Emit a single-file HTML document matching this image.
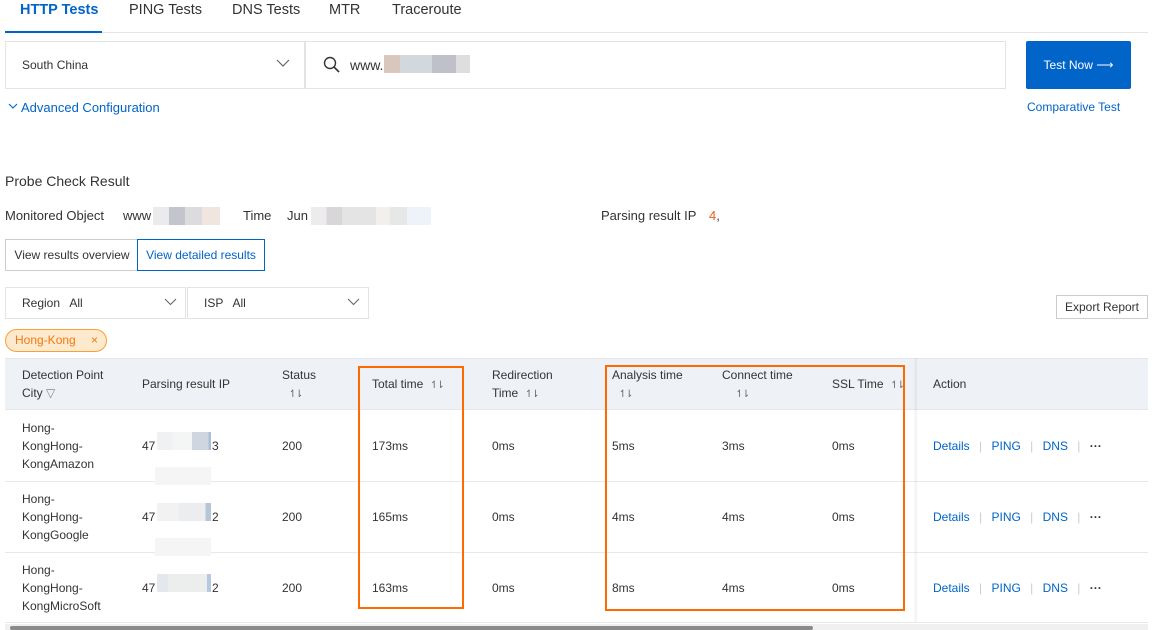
<!DOCTYPE html>
<html><head><meta charset="utf-8"><style>
*{margin:0;padding:0;box-sizing:border-box}
body{width:1159px;height:630px;overflow:hidden;background:#fff;font-family:"Liberation Sans",Arial,sans-serif;color:#333;position:relative;font-size:12px}
.a{position:absolute;white-space:nowrap}
.blur{position:absolute;height:18px}
.cell{position:absolute;font-size:12px;color:#333;line-height:18px;white-space:nowrap}
.link,.cell.link{color:#0064c8}
.sort{font-size:10px;color:#666;letter-spacing:-2px}
</style></head><body>
<!-- tabs -->
<div class="a" style="left:20px;top:2px;font-size:14.5px;font-weight:bold;color:#0064c8">HTTP Tests</div>
<div class="a" style="left:129px;top:2px;font-size:14.5px;color:#333">PING Tests</div>
<div class="a" style="left:232px;top:2px;font-size:14.5px;color:#333">DNS Tests</div>
<div class="a" style="left:329px;top:2px;font-size:14.5px;color:#333">MTR</div>
<div class="a" style="left:392px;top:2px;font-size:14.5px;color:#333">Traceroute</div>
<div class="a" style="left:5px;top:32px;width:1143px;height:1px;background:#e5e5e5"></div>
<div class="a" style="left:5px;top:31px;width:97px;height:2px;background:#0064c8"></div>
<!-- inputs -->
<div class="a" style="left:5px;top:41px;width:300px;height:48px;border:1px solid #e3e3e3"></div>
<div class="a" style="left:22px;top:58px;font-size:12px;color:#333">South China</div>
<svg class="a" style="left:276px;top:59px" width="14" height="9"><path d="M1 1l6 6 6-6" fill="none" stroke="#666" stroke-width="1.2"/></svg>
<div class="a" style="left:305px;top:41px;width:701px;height:48px;border:1px solid #e3e3e3"></div>
<svg class="a" style="left:323px;top:56px" width="18" height="18"><circle cx="7" cy="7" r="5.5" fill="none" stroke="#333" stroke-width="1.4"/><path d="M11 11l5 5" stroke="#333" stroke-width="1.6"/></svg>
<div class="a" style="left:350px;top:57px;font-size:14px;color:#333">www.</div>
<div class="blur" style="left:384px;top:55px;width:16px;background:#d9c6bc"></div>
<div class="blur" style="left:400px;top:55px;width:32px;background:#d3d8dc"></div>
<div class="blur" style="left:432px;top:55px;width:24px;background:#c0c0c8"></div>
<div class="blur" style="left:456px;top:55px;width:14px;background:#dedee0"></div>
<div class="a" style="left:1026px;top:41px;width:105px;height:48px;background:#0064c8;border-radius:2px;color:#fff;font-size:12px;line-height:48px;text-align:center">Test Now ⟶</div>
<div class="a link" style="left:1027px;top:100px;font-size:12px">Comparative Test</div>
<svg class="a" style="left:8px;top:103px" width="10" height="8"><path d="M1 1l4 4 4-4" fill="none" stroke="#0064c8" stroke-width="1.1"/></svg>
<div class="a link" style="left:21px;top:100px;font-size:13px">Advanced Configuration</div>
<!-- result -->
<div class="a" style="left:5px;top:173px;font-size:14px;color:#333">Probe Check Result</div>
<div class="a" style="left:5px;top:208px;font-size:13px">Monitored Object</div>
<div class="a" style="left:123px;top:208px;font-size:13px">www</div>
<div class="blur" style="left:153px;top:207px;width:16px;background:#ebebed"></div>
<div class="blur" style="left:169px;top:207px;width:16px;background:#c3c4cc"></div>
<div class="blur" style="left:185px;top:207px;width:17px;background:#dcdcde"></div>
<div class="blur" style="left:202px;top:207px;width:18px;background:#f0e6df"></div>
<div class="a" style="left:243px;top:208px;font-size:13px">Time</div>
<div class="a" style="left:287px;top:208px;font-size:13px">Jun</div>
<div class="blur" style="left:311px;top:207px;width:120px;background:linear-gradient(90deg,#ececec 0 13%,#d8d6d8 13% 26%,#e4e4e4 26% 54%,#f3efec 54% 66%,#e6e7e7 66% 80%,#eef2fa 80%)"></div>
<div class="a" style="left:601px;top:208px;font-size:13px">Parsing result IP</div>
<div class="a" style="left:709px;top:208px;font-size:13px;color:#f05a1e">4<span style="color:#333">,</span></div>
<div class="a" style="left:5px;top:239px;width:133px;height:32px;border:1px solid #ccc;border-right:none;font-size:12px;line-height:30px;text-align:center">View results overview</div>
<div class="a" style="left:137px;top:239px;width:128px;height:32px;border:1px solid #0064c8;font-size:12px;line-height:30px;text-align:center;color:#0064c8">View detailed results</div>
<div class="a" style="left:5px;top:287px;width:181px;height:32px;border:1px solid #e3e3e3"></div>
<div class="a" style="left:22px;top:296px;font-size:12px">Region &nbsp; All</div>
<svg class="a" style="left:164px;top:298px" width="13" height="8"><path d="M1 1l5.5 5.5 5.5-5.5" fill="none" stroke="#666" stroke-width="1.1"/></svg>
<div class="a" style="left:187px;top:287px;width:182px;height:32px;border:1px solid #e3e3e3"></div>
<div class="a" style="left:204px;top:296px;font-size:12px">ISP &nbsp; All</div>
<svg class="a" style="left:347px;top:298px" width="13" height="8"><path d="M1 1l5.5 5.5 5.5-5.5" fill="none" stroke="#666" stroke-width="1.1"/></svg>
<div class="a" style="left:1056px;top:295px;width:92px;height:24px;border:1px solid #ccc;font-size:12px;line-height:22px;text-align:center">Export Report</div>
<div class="a" style="left:5px;top:329px;width:102px;height:23px;border:1px solid #f7a23a;border-radius:12px;background:#fde9cc;color:#f07a12;font-size:12px;line-height:21px;padding-left:9px">Hong-Kong <span style="margin-left:12px">×</span></div>
<!-- table -->
<div class="a" style="left:5px;top:358px;width:1143px;height:52px;background:#eef1f5;border-top:1px solid #e3e6ea;border-bottom:1px solid #e3e6ea"></div>
<div class="a" style="left:5px;top:481px;width:1143px;height:1px;background:#e8e8e8"></div>
<div class="a" style="left:5px;top:552px;width:1143px;height:1px;background:#e8e8e8"></div>
<div class="a" style="left:5px;top:622px;width:1143px;height:1px;background:#e8e8e8"></div>
<div class="a" style="left:913px;top:358px;width:4px;height:264px;background:linear-gradient(90deg,rgba(0,0,0,0),rgba(0,0,0,.06))"></div>
<div class="cell" style="left:22px;top:366px">Detection Point<br>City <span style="color:#888">▽</span></div>
<div class="cell" style="left:142px;top:375px">Parsing result IP</div>
<div class="cell" style="left:282px;top:366px">Status<br>&nbsp;&nbsp;<span class="sort">↿⇂</span></div>
<div class="cell" style="left:372px;top:375px">Total time &nbsp;<span class="sort">↿⇂</span></div>
<div class="cell" style="left:492px;top:366px">Redirection<br>Time &nbsp;<span class="sort">↿⇂</span></div>
<div class="cell" style="left:612px;top:366px">Analysis time<br>&nbsp;&nbsp;<span class="sort">↿⇂</span></div>
<div class="cell" style="left:722px;top:366px">Connect time<br>&nbsp;&nbsp;&nbsp;&nbsp;<span class="sort">↿⇂</span></div>
<div class="cell" style="left:832px;top:375px">SSL Time &nbsp;<span class="sort">↿⇂</span></div>
<div class="cell" style="left:933px;top:375px">Action</div>

<!-- rows -->
<div class="cell" style="left:22px;top:419px">Hong-<br>KongHong-<br>KongAmazon</div>
<div class="cell" style="left:142px;top:437px">47</div>
<div class="blur" style="left:157px;top:432px;width:54px;background:linear-gradient(90deg,#f0f1f2 0 30%,#f4f5f5 30% 65%,#cfd6df 65% 95%,#a9bfd8 95%)"></div>
<div class="cell" style="left:212px;top:437px">3</div>
<div class="blur" style="left:155px;top:467px;width:56px;background:#f5f5f5"></div>
<div class="cell" style="left:282px;top:437px">200</div>
<div class="cell" style="left:372px;top:437px">173ms</div>
<div class="cell" style="left:492px;top:437px">0ms</div>
<div class="cell" style="left:612px;top:437px">5ms</div>
<div class="cell" style="left:722px;top:437px">3ms</div>
<div class="cell" style="left:832px;top:437px">0ms</div>

<div class="cell" style="left:22px;top:490px">Hong-<br>KongHong-<br>KongGoogle</div>
<div class="cell" style="left:142px;top:508px">47</div>
<div class="blur" style="left:157px;top:503px;width:54px;background:linear-gradient(90deg,#f2f2f3 0 40%,#ecedee 40% 90%,#b7c5d8 90%)"></div>
<div class="cell" style="left:212px;top:508px">2</div>
<div class="blur" style="left:155px;top:538px;width:56px;background:#f5f5f5"></div>
<div class="cell" style="left:282px;top:508px">200</div>
<div class="cell" style="left:372px;top:508px">165ms</div>
<div class="cell" style="left:492px;top:508px">0ms</div>
<div class="cell" style="left:612px;top:508px">4ms</div>
<div class="cell" style="left:722px;top:508px">4ms</div>
<div class="cell" style="left:832px;top:508px">0ms</div>

<div class="cell" style="left:22px;top:561px">Hong-<br>KongHong-<br>KongMicroSoft</div>
<div class="cell" style="left:142px;top:579px">47</div>
<div class="blur" style="left:157px;top:574px;width:54px;background:linear-gradient(90deg,#e4e7ec 0 20%,#eceded 20% 93%,#b7c9e0 93%)"></div>
<div class="cell" style="left:212px;top:579px">2</div>
<div class="cell" style="left:282px;top:579px">200</div>
<div class="cell" style="left:372px;top:579px">163ms</div>
<div class="cell" style="left:492px;top:579px">0ms</div>
<div class="cell" style="left:612px;top:579px">8ms</div>
<div class="cell" style="left:722px;top:579px">4ms</div>
<div class="cell" style="left:832px;top:579px">0ms</div>

<!-- actions -->
<div class="cell link" style="left:933px;top:437px">Details <span style="color:#ccc;margin:0 6px">|</span> PING <span style="color:#ccc;margin:0 6px">|</span> DNS <span style="color:#ccc;margin:0 6px">|</span> <span style="color:#333;font-weight:bold">···</span></div>
<div class="cell link" style="left:933px;top:508px">Details <span style="color:#ccc;margin:0 6px">|</span> PING <span style="color:#ccc;margin:0 6px">|</span> DNS <span style="color:#ccc;margin:0 6px">|</span> <span style="color:#333;font-weight:bold">···</span></div>
<div class="cell link" style="left:933px;top:579px">Details <span style="color:#ccc;margin:0 6px">|</span> PING <span style="color:#ccc;margin:0 6px">|</span> DNS <span style="color:#ccc;margin:0 6px">|</span> <span style="color:#333;font-weight:bold">···</span></div>

<!-- orange boxes -->
<div class="a" style="left:358px;top:366px;width:106px;height:243px;border:2.5px solid #ff6a00"></div>
<div class="a" style="left:605px;top:365px;width:300px;height:246px;border:2.5px solid #ff6a00"></div>

<!-- scrollbar -->
<div class="a" style="left:5px;top:624px;width:1143px;height:6px;background:#f0f0f0"></div>
<div class="a" style="left:10px;top:626px;width:803px;height:4px;background:#8a8a8a;border-radius:2px"></div>
</body></html>
